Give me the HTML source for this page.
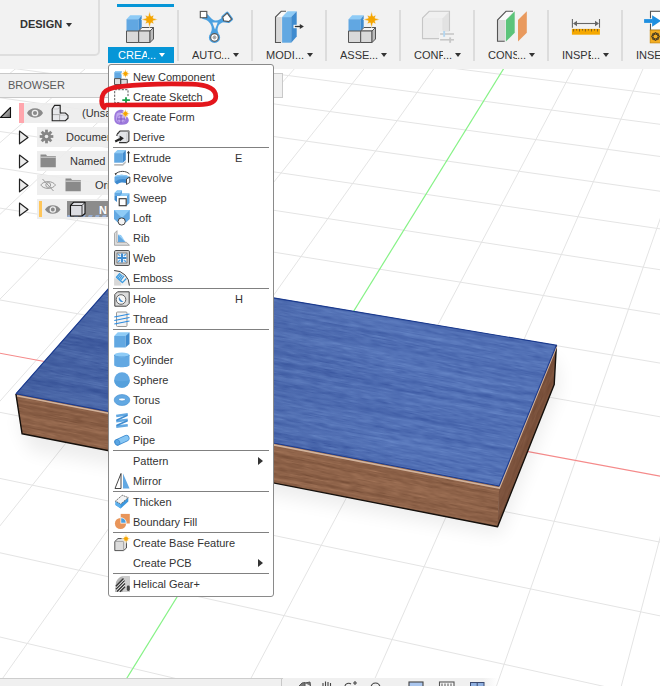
<!DOCTYPE html>
<html><head><meta charset="utf-8">
<style>
html,body{margin:0;padding:0;}
body{width:660px;height:686px;overflow:hidden;position:relative;background:#fff;font-family:"Liberation Sans",sans-serif;font-size:11px;color:#333;}
.abs{position:absolute;}
#tb{position:absolute;left:0;top:0;width:660px;height:69px;background:#f2f2f2;}
.lbl{position:absolute;top:48px;height:14px;line-height:14px;font-size:11px;color:#333;white-space:nowrap;}
.arr{position:absolute;width:0;height:0;border-left:3px solid transparent;border-right:3px solid transparent;border-top:4px solid #333;}
.sep{position:absolute;top:10px;width:2px;height:51px;background:#dcdcdc;}
#menu{position:absolute;left:108px;top:64px;width:164px;height:529px;border:1px solid #8a8a8a;border-radius:3px;background:#fff;padding-top:2px;}
.it{position:relative;height:20px;line-height:20px;padding-left:24px;white-space:nowrap;color:#333;}
.it svg{position:absolute;left:5px;top:2px;}
.sc{position:absolute;left:126px;top:0;}
.ms{height:1px;background:#808080;margin-left:4px;margin-right:4px;}
.sub{position:absolute;left:149px;top:6px;width:0;height:0;border-top:4.5px solid transparent;border-bottom:4.5px solid transparent;border-left:5px solid #333;}
</style></head><body>
<svg class="abs" style="left:0;top:0" width="660" height="686" viewBox="0 0 660 686">
<defs>
<filter id="woodb" x="-50%" y="-50%" width="200%" height="200%" color-interpolation-filters="sRGB">
<feTurbulence type="fractalNoise" baseFrequency="0.004 0.2" numOctaves="3" seed="7" result="a"/>
<feTurbulence type="fractalNoise" baseFrequency="0.07 0.7" numOctaves="2" seed="3" result="b"/>
<feComposite in="a" in2="b" operator="arithmetic" k1="0" k2="0.55" k3="0.45" k4="0"/>
<feColorMatrix type="matrix" values="0.3 0 0 0 0.17  0.32 0 0 0 0.28  0.26 0 0 0 0.58  0 0 0 0 1"/>
</filter>
<filter id="woodr" x="-50%" y="-50%" width="200%" height="200%" color-interpolation-filters="sRGB">
<feTurbulence type="fractalNoise" baseFrequency="0.006 0.3" numOctaves="3" seed="11" result="a"/>
<feTurbulence type="fractalNoise" baseFrequency="0.08 0.8" numOctaves="2" seed="5" result="b"/>
<feComposite in="a" in2="b" operator="arithmetic" k1="0" k2="0.55" k3="0.45" k4="0"/>
<feColorMatrix type="matrix" values="0.32 0 0 0 0.39  0.28 0 0 0 0.24  0.24 0 0 0 0.16  0 0 0 0 1"/>
</filter>
<linearGradient id="topshade" gradientUnits="userSpaceOnUse" x1="0" y1="0" x2="400" y2="0"><stop offset="0" stop-color="#001040" stop-opacity="0.18"/><stop offset="1" stop-color="#001040" stop-opacity="0"/></linearGradient>
<clipPath id="ctop"><polygon points="15.9,393.8 122.5,272.6 556.4,345.2 499.2,486"/></clipPath>
<clipPath id="cfront"><polygon points="15.9,393.8 499.2,486 497.6,526.7 22.1,433.8"/></clipPath>
<clipPath id="cright"><polygon points="499.2,486 556.4,345.2 554.2,384.5 497.6,526.7"/></clipPath>
</defs>
<path d="M-162.3 -97.3L-1217.4 467.6M-116.4 -92.2L-1145.5 486.4M-69.8 -87.0L-1071.4 505.9M-22.4 -81.8L-994.8 526.0M25.8 -76.4L-915.7 546.7M74.9 -71.0L-833.8 568.2M124.7 -65.5L-749.1 590.4M175.5 -59.9L-661.4 613.4M227.1 -54.2L-570.6 637.2M279.7 -48.4L-476.4 661.9M333.1 -42.5L-378.7 687.5M387.6 -36.4L-277.3 714.1M443.0 -30.3L-172.0 741.7M499.5 -24.1L-62.5 770.4M615.6 -11.2L170.0 831.3M675.3 -4.6L293.5 863.7M736.1 2.1L422.4 897.5M798.1 9.0L556.9 932.7M861.2 15.9L697.5 969.6M925.7 23.1L844.5 1008.1M991.4 30.3L998.3 1048.5M-162.3 -97.3L1058.4 37.7M-192.8 -80.9L1060.7 62.2M-225.0 -63.7L1063.2 88.3M-259.0 -45.5L1065.9 116.2M-294.9 -26.2L1068.8 146.1M-333.0 -5.9L1071.9 178.3M-373.4 15.8L1075.2 213.0M-416.4 38.8L1078.8 250.5M-462.2 63.3L1082.7 291.2M-511.0 89.5L1087.0 335.4M-563.3 117.5L1091.6 383.7M-619.4 147.5L1096.7 436.7M-679.7 179.7L1102.4 495.1M-814.9 252.1L1115.5 631.7M-891.1 292.9L1123.2 712.3M-974.0 337.3L1132.0 803.2M-1064.6 385.8L1141.9 906.5M-1164.0 439.0L1153.3 1024.8" stroke="#e4e4e4" stroke-width="1" fill="none"/>
<path d="M557.0 -17.7L51.4 800.2" stroke="#86f286" stroke-width="1.2" fill="none"/>
<path d="M-744.6 214.5L1108.6 559.8" stroke="#f58a8a" stroke-width="1.2" fill="none"/>
<filter id="blur8" x="-20%" y="-50%" width="140%" height="200%"><feGaussianBlur stdDeviation="9"/></filter>
<polygon points="18,420 122,300 556,360 560,385 500,535 30,450" fill="#000" opacity="0.07" filter="url(#blur8)"/>
<!-- box -->
<g clip-path="url(#cfront)"><rect x="0" y="380" width="520" height="160" fill="#8a5c42"/><g transform="rotate(11 16 394)"><rect x="0" y="360" width="540" height="90" filter="url(#woodr)"/></g></g>
<g clip-path="url(#cright)"><rect x="490" y="340" width="70" height="190" fill="#6a4532"/><g opacity="0.5" transform="rotate(-68 527 436)"><rect x="450" y="410" width="170" height="50" filter="url(#woodr)"/></g></g>
<g clip-path="url(#ctop)"><rect x="0" y="260" width="570" height="240" fill="#4a66ad"/><g transform="rotate(10.3 16 394)"><rect x="-20" y="180" width="620" height="260" filter="url(#woodb)"/></g><rect x="0" y="260" width="570" height="240" fill="url(#topshade)"/></g>
<polyline points="15.9,393.8 22.1,433.8 497.6,526.7 554.2,384.5 556.4,345.2" fill="none" stroke="#15100c" stroke-width="1.4" stroke-linejoin="round"/>
<polyline points="17,395.8 499.3,488 556.6,346.5" fill="none" stroke="#d2b39c" stroke-width="1.6"/>
<polyline points="15.9,393.8 122.5,272.6 556.4,345.2 499.2,486 15.9,393.8" fill="none" stroke="#1a3a8e" stroke-width="1.1"/>
</svg>

<div id="tb">
  <div class="abs" style="left:-10px;top:-10px;width:106px;height:62px;border:2px solid #dedede;border-radius:5px;"></div>
  <div class="abs" style="left:20px;top:17px;font-weight:bold;font-size:11px;color:#333;line-height:14px;">DESIGN</div>
  <div class="arr" style="left:66px;top:23px;"></div>

  <!-- CREATE -->
  <div class="abs" style="left:117px;top:4px;width:57px;height:3px;background:#0696d7;"></div>
  <div class="abs" style="left:108px;top:47px;width:66px;height:16px;background:#0696d7;"></div>
  <div class="lbl" style="left:118px;color:#fff;"><span style="display:inline-block;width:29px;overflow:hidden;vertical-align:top;">CREATE</span><span style="position:absolute;left:29px;top:0;">...</span></div>
  <div class="arr" style="left:159px;top:53px;border-top-color:#fff;"></div>
  <div class="sep" style="left:177px;"></div>

  <div class="lbl" style="left:192px;"><span style="display:inline-block;width:29px;overflow:hidden;vertical-align:top;">AUTOMATE</span><span style="position:absolute;left:29px;top:0;">...</span></div>
  <div class="arr" style="left:233px;top:53px;"></div>
  <div class="sep" style="left:251px;"></div>

  <div class="lbl" style="left:266px;"><span style="display:inline-block;width:29px;overflow:hidden;vertical-align:top;">MODIFY</span><span style="position:absolute;left:29px;top:0;">...</span></div>
  <div class="arr" style="left:307px;top:53px;"></div>
  <div class="sep" style="left:325px;"></div>

  <div class="lbl" style="left:340px;"><span style="display:inline-block;width:29px;overflow:hidden;vertical-align:top;">ASSEMBLE</span><span style="position:absolute;left:29px;top:0;">...</span></div>
  <div class="arr" style="left:381px;top:53px;"></div>
  <div class="sep" style="left:399px;"></div>

  <div class="lbl" style="left:414px;"><span style="display:inline-block;width:29px;overflow:hidden;vertical-align:top;">CONFIGURE</span><span style="position:absolute;left:29px;top:0;">...</span></div>
  <div class="arr" style="left:455px;top:53px;"></div>
  <div class="sep" style="left:473px;"></div>

  <div class="lbl" style="left:488px;"><span style="display:inline-block;width:29px;overflow:hidden;vertical-align:top;">CONSTRUCT</span><span style="position:absolute;left:29px;top:0;">...</span></div>
  <div class="arr" style="left:529px;top:53px;"></div>
  <div class="sep" style="left:547px;"></div>

  <div class="lbl" style="left:562px;"><span style="display:inline-block;width:29px;overflow:hidden;vertical-align:top;">INSPECT</span><span style="position:absolute;left:29px;top:0;">...</span></div>
  <div class="arr" style="left:603px;top:53px;"></div>
  <div class="sep" style="left:621px;"></div>

  <div class="lbl" style="left:636px;">INSE</div>

  <!-- toolbar icons -->
  <svg class="abs" style="left:122px;top:8px" width="40" height="38" viewBox="0 0 40 38">
    <path d="M4.5,11.2 L8.2,7.3 L19.7,7.3 L16.7,11.2 Z" fill="#8ecbf6"/>
    <path d="M4.5,11.2 H16.7 V23 H4.5 Z" fill="#61a7e2"/>
    <path d="M16.7,11.2 L19.7,7.3 V19.5 L16.7,23 Z" fill="#3f8bcf"/>
    <path d="M4.5,23 H16.7 V34.5 H4.5 Z" fill="#d9d9d9" stroke="#555" stroke-width="1"/>
    <path d="M16.7,23 L20,19.5 H31.5 L28,23 Z" fill="#f6f6f6" stroke="#555" stroke-width="1" stroke-linejoin="round"/>
    <path d="M16.7,23 H28 V34.5 H16.7 Z" fill="#d9d9d9" stroke="#555" stroke-width="1"/>
    <path d="M28,23 L31.5,19.5 V31 L28,34.5 Z" fill="#bdbdbd" stroke="#555" stroke-width="1" stroke-linejoin="round"/>
    <path d="M27.60,3.30 L28.98,8.17 L32.05,7.05 L30.93,10.12 L35.80,11.50 L30.93,12.88 L32.05,15.95 L28.98,14.83 L27.60,19.70 L26.22,14.83 L23.15,15.95 L24.27,12.88 L19.40,11.50 L24.27,10.12 L23.15,7.05 L26.22,8.17 Z" fill="#f5a500" stroke="#f2f2f2" stroke-width="0.6"/>
  </svg>
  <svg class="abs" style="left:196px;top:8px" width="40" height="38" viewBox="0 0 40 38">
    <path d="M9.5,4.8 C13,7 15.5,12.3 19.5,12.5 C23,12.6 25,10.5 27.5,8.5 L31.5,13.5 C27.5,13.8 23.5,15 22.2,18.5 C21.3,21 21.3,23 22.5,25 L14.5,25 C15.8,23 16,21 15.5,18.5 C14.5,15 11.5,11.5 6,10.8 Z" fill="#4aa0e0"/>
    <path d="M16.4,14.6 L21.7,14.6 L19,21.6 Z" fill="#f2f2f2"/>
    <path d="M26.8,9.1 L31.2,5.2 L35.6,11.2 L32.7,13.6 L27.6,12.7 Z" fill="#4aa0e0" stroke="#4aa0e0" stroke-width="3" stroke-linejoin="round"/>
    <rect x="4.3" y="3.4" width="6.5" height="6.3" fill="#fff" stroke="#555" stroke-width="1.1"/>
    <path d="M26.8,9.1 L31.2,5.2 L35.6,11.2 L32.7,13.6 L27.6,12.7 Z" fill="#fff" stroke="#555" stroke-width="1.1" stroke-linejoin="round"/>
    <circle cx="18.5" cy="29.4" r="5.6" fill="#4aa0e0"/>
    <circle cx="18.5" cy="29.4" r="3.8" fill="#fff" stroke="#555" stroke-width="1.1"/>
    <circle cx="18.5" cy="29.4" r="1.5" fill="none" stroke="#777" stroke-width="0.7"/>
    <path d="M18.5,28 V30.8 M17.1,29.4 H19.9" stroke="#777" stroke-width="0.5"/>
  </svg>
  <svg class="abs" style="left:270px;top:8px" width="40" height="38" viewBox="0 0 40 38">
    <path d="M5.5,9.1 L11.2,3.3 H16 L12.1,9.1 Z" fill="#fafafa"/>
    <rect x="5.5" y="9.1" width="6.2" height="25.4" fill="#d9d9d9"/>
    <path d="M11,34.5 H5.5 V9.1 L11.2,3.3 H16" fill="none" stroke="#555" stroke-width="1.1"/>
    <path d="M12.1,9.1 L17.6,3.3 H26.7 L21.2,9.1 Z" fill="#8ecbf6"/>
    <rect x="12.1" y="9.1" width="9.1" height="25.6" fill="#62a8e2"/>
    <path d="M21.2,9.1 L26.7,3.3 V28.5 L21.2,34.7 Z" fill="#3f8bcf"/>
    <rect x="23.5" y="16.8" width="6" height="3.4" fill="#fff"/>
    <path d="M24.8,18.5 H30.5" stroke="#333" stroke-width="1.4"/>
    <path d="M29.8,15.9 L33.9,18.5 L29.8,21.1 Z" fill="#333"/>
  </svg>
  <svg class="abs" style="left:344px;top:8px" width="40" height="38" viewBox="0 0 40 38">
    <path d="M4.5,11.2 L8.2,7.3 L19.7,7.3 L16.7,11.2 Z" fill="#8ecbf6"/>
    <path d="M4.5,11.2 H16.7 V23 H4.5 Z" fill="#61a7e2"/>
    <path d="M16.7,11.2 L19.7,7.3 V19.5 L16.7,23 Z" fill="#3f8bcf"/>
    <path d="M4.5,23 H16.7 V34.5 H4.5 Z" fill="#d9d9d9" stroke="#555" stroke-width="1"/>
    <path d="M16.7,23 L20,19.5 H31.5 L28,23 Z" fill="#f6f6f6" stroke="#555" stroke-width="1" stroke-linejoin="round"/>
    <path d="M16.7,23 H28 V34.5 H16.7 Z" fill="#d9d9d9" stroke="#555" stroke-width="1"/>
    <path d="M28,23 L31.5,19.5 V31 L28,34.5 Z" fill="#bdbdbd" stroke="#555" stroke-width="1" stroke-linejoin="round"/>
    <path d="M27.60,3.30 L28.98,8.17 L32.05,7.05 L30.93,10.12 L35.80,11.50 L30.93,12.88 L32.05,15.95 L28.98,14.83 L27.60,19.70 L26.22,14.83 L23.15,15.95 L24.27,12.88 L19.40,11.50 L24.27,10.12 L23.15,7.05 L26.22,8.17 Z" fill="#f5a500" stroke="#f2f2f2" stroke-width="0.6"/>
  </svg>
  <svg class="abs" style="left:418px;top:8px" width="40" height="38" viewBox="0 0 40 38">
    <path d="M4.5,10 L11.2,3.3 H31.5 L24.8,10 Z" fill="#f0f0f0"/>
    <rect x="4.5" y="10" width="20.3" height="20.6" fill="#ececec"/>
    <path d="M24.8,10 L31.5,3.3 V23.5 L24.8,30.6 Z" fill="#e2e2e2"/>
    <path d="M21,30.6 H4.5 V10 L11.2,3.3 H31.5 V23" fill="none" stroke="#c6c6c6" stroke-width="1.1"/>
    <path d="M24.8,10 V22" stroke="#dcdcdc" stroke-width="0.6"/>
    <rect x="21" y="23.6" width="16" height="10.5" fill="#f2f2f2"/>
    <rect x="22.1" y="25.2" width="13.9" height="1.6" fill="#c8c8c8"/>
    <rect x="25.2" y="23" width="1.9" height="5.8" fill="#b4d6f0"/>
    <rect x="22.1" y="31" width="13.9" height="1.6" fill="#c8c8c8"/>
    <rect x="31.2" y="29.4" width="1.9" height="5.4" fill="#c8c8c8"/>
  </svg>
  <svg class="abs" style="left:492px;top:8px" width="40" height="38" viewBox="0 0 40 38">
    <path d="M5.5,12 L14,3.3 H21 L13.9,12 Z" fill="#fafafa"/>
    <rect x="5.5" y="12" width="7.6" height="21.3" fill="#d9d9d9"/>
    <path d="M12.7,33.3 H5.5 V12 L14,3.3 H21" fill="none" stroke="#555" stroke-width="1.1"/>
    <path d="M13.9,12.1 L22.7,3.3 V24.8 L13.9,33.6 Z" fill="#5cc47a"/>
    <path d="M26,12.1 L34.8,3.3 V24.8 L26,33.6 Z" fill="#e99a5e"/>
  </svg>
  <svg class="abs" style="left:566px;top:8px" width="40" height="38" viewBox="0 0 40 38">
    <path d="M6.4,10.9 V19.7 M33.5,10.9 V19.7" stroke="#666" stroke-width="1.1"/>
    <path d="M8,15.5 H32" stroke="#666" stroke-width="1.1"/>
    <path d="M7,15.5 L11,12.8 V18.2 Z M33,15.5 L29,12.8 V18.2 Z" fill="#666"/>
    <rect x="5.9" y="20.9" width="28" height="5.8" fill="#f5a800"/>
    <path d="M7.6,21 V23.5 M10.6,21 V22.6 M13.5,21 V23.5 M16.5,21 V22.6 M19.4,21 V23.5 M22.4,21 V22.6 M25.5,21 V23.5 M28.5,21 V22.6 M31.5,21 V23.5" stroke="#7a5a20" stroke-width="0.9"/>
  </svg>
  <svg class="abs" style="left:630px;top:8px" width="30" height="38" viewBox="0 0 30 38">
    <rect x="20.5" y="3.3" width="12" height="19" fill="#fff" stroke="#555" stroke-width="1.1"/>
    <rect x="13" y="10.3" width="9.5" height="5.4" fill="#f2f2f2"/>
    <rect x="14.1" y="11.1" width="8.5" height="3.8" fill="#1e8fe0"/>
    <path d="M22.1,7.2 L31,12.9 L22.1,18.8 Z" fill="#1e8fe0"/>
    <rect x="20.2" y="22.1" width="12" height="12.8" fill="#f5ae22" stroke="#c8880a" stroke-width="0.8"/>
    <circle cx="25.5" cy="28.5" r="2.6" fill="#f5ae22" stroke="#222" stroke-width="0.9"/><circle cx="28.50" cy="28.50" r="1" fill="none" stroke="#222" stroke-width="0.8"/><circle cx="27.62" cy="30.62" r="1" fill="none" stroke="#222" stroke-width="0.8"/><circle cx="25.50" cy="31.50" r="1" fill="none" stroke="#222" stroke-width="0.8"/><circle cx="23.38" cy="30.62" r="1" fill="none" stroke="#222" stroke-width="0.8"/><circle cx="22.50" cy="28.50" r="1" fill="none" stroke="#222" stroke-width="0.8"/><circle cx="23.38" cy="26.38" r="1" fill="none" stroke="#222" stroke-width="0.8"/><circle cx="25.50" cy="25.50" r="1" fill="none" stroke="#222" stroke-width="0.8"/><circle cx="27.62" cy="26.38" r="1" fill="none" stroke="#222" stroke-width="0.8"/><circle cx="25.5" cy="28.5" r="2.1" fill="#f5ae22"/>
  </svg>
</div>

<!-- browser -->
<div class="abs" style="left:-1px;top:73px;width:282px;height:23px;background:rgba(240,240,240,0.97);border:1px solid #c9c9c9;"></div>
<div class="abs" style="left:8px;top:78px;line-height:14px;color:#5a5a5a;">BROWSER</div>


<!-- browser tree -->
<div class="abs" style="left:24px;top:103px;width:84px;height:20px;background:rgba(236,236,236,0.9);"></div>
<div class="abs" style="left:19px;top:103px;width:5px;height:20px;background:#ffa6ad;"></div>
<svg class="abs" style="left:0;top:104px" width="14" height="16" viewBox="0 0 14 16"><defs><linearGradient id="tg" x1="0" y1="0" x2="1" y2="1"><stop offset="0" stop-color="#eee"/><stop offset="1" stop-color="#666"/></linearGradient></defs><path d="M0.5,13.5 L10.5,3.5 V13.5 Z" fill="url(#tg)" stroke="#111" stroke-width="1.1" stroke-linejoin="round"/></svg>
<svg class="abs" style="left:26px;top:105px" width="20" height="16" viewBox="0 0 20 16"><path d="M1,8 C4,1.8 14,1.8 17,8 C14,14.2 4,14.2 1,8 Z" fill="#8a8a8a"/><circle cx="9" cy="8" r="2.7" fill="none" stroke="#eee" stroke-width="1.3"/></svg>
<svg class="abs" style="left:50px;top:103px" width="20" height="20" viewBox="0 0 20 20"><path d="M2.2,6 L4.6,2.4 H10.2 V10 H15.4 L18,12.4 V15.2 L15.4,17.7 H2.2 Z" fill="#e8e9ec"/><path d="M2.2,11.6 H9.6 V17.7 M9.6,11.6 L11.6,10" fill="none" stroke="#9a9a9a" stroke-width="0.8"/><path d="M2.2,6 H8.2 L10.2,2.6 M2.2,6 V11.6 M9.6,12.2 H15.2 L18,12.4" fill="none" stroke="#bdbdbd" stroke-width="0.7"/><path d="M2.2,6 L4.6,2.4 H10.2 V10 H15.4 L18,12.4 V15.2 L15.4,17.7 H2.2 Z" fill="none" stroke="#222" stroke-width="1.1" stroke-linejoin="miter"/></svg>
<div class="abs" style="left:82px;top:105px;line-height:17px;font-size:11px;color:#333;">(Unsaved)</div>

<div class="abs" style="left:37px;top:127px;width:71px;height:20px;background:rgba(236,236,236,0.9);"></div>
<svg class="abs" style="left:18px;top:130px" width="12" height="15" viewBox="0 0 12 15"><path d="M1.5,1 L10,7.4 L1.5,13.8 Z" fill="#ececec" stroke="#222" stroke-width="1.2" stroke-linejoin="round"/></svg>
<svg class="abs" style="left:39px;top:129px" width="16" height="16" viewBox="0 0 16 16"><g transform="translate(7.5,7.5)" fill="#858585"><circle r="4.6"/><g id="teeth"><rect x="-1.4" y="-6.8" width="2.8" height="3"/><rect x="-1.4" y="3.8" width="2.8" height="3"/><rect x="-6.8" y="-1.4" width="3" height="2.8"/><rect x="3.8" y="-1.4" width="3" height="2.8"/></g><g transform="rotate(45)"><rect x="-1.4" y="-6.8" width="2.8" height="3"/><rect x="-1.4" y="3.8" width="2.8" height="3"/><rect x="-6.8" y="-1.4" width="3" height="2.8"/><rect x="3.8" y="-1.4" width="3" height="2.8"/></g><circle r="1.8" fill="#ececec"/></g></svg>
<div class="abs" style="left:66px;top:130px;line-height:14px;font-size:11px;color:#333;">Document Settings</div>

<div class="abs" style="left:37px;top:151px;width:71px;height:20px;background:rgba(236,236,236,0.9);"></div>
<svg class="abs" style="left:18px;top:154px" width="12" height="15" viewBox="0 0 12 15"><path d="M1.5,1 L10,7.4 L1.5,13.8 Z" fill="#ececec" stroke="#222" stroke-width="1.2" stroke-linejoin="round"/></svg>
<svg class="abs" style="left:40px;top:154px" width="16" height="14" viewBox="0 0 16 14"><path d="M0.5,0.5 H6 L7,2 H15.8 V13.2 H0.5 Z" fill="#8a8a8a"/><path d="M0.5,3.2 H15.8" stroke="#ececec" stroke-width="0.8"/></svg>
<div class="abs" style="left:70px;top:154px;line-height:14px;font-size:11px;color:#333;">Named Views</div>

<div class="abs" style="left:37px;top:175px;width:71px;height:20px;background:rgba(236,236,236,0.9);"></div>
<svg class="abs" style="left:18px;top:178px" width="12" height="15" viewBox="0 0 12 15"><path d="M1.5,1 L10,7.4 L1.5,13.8 Z" fill="#ececec" stroke="#222" stroke-width="1.2" stroke-linejoin="round"/></svg>
<svg class="abs" style="left:40px;top:178px" width="17" height="14" viewBox="0 0 17 14"><path d="M0.8,7 C3.5,2.5 12.5,2.5 15.5,7 C12.5,11.5 3.5,11.5 0.8,7 Z" fill="none" stroke="#9a9a9a" stroke-width="1"/><circle cx="8.2" cy="7" r="2.4" fill="none" stroke="#9a9a9a" stroke-width="1"/><path d="M2.5,1 L13.5,13" stroke="#9a9a9a" stroke-width="1"/></svg>
<svg class="abs" style="left:65px;top:178px" width="16" height="14" viewBox="0 0 16 14"><path d="M0.5,0.5 H6 L7,2 H15.8 V13.2 H0.5 Z" fill="#8a8a8a"/><path d="M0.5,3.2 H15.8" stroke="#ececec" stroke-width="0.8"/></svg>
<div class="abs" style="left:95px;top:178px;line-height:14px;font-size:11px;color:#333;">Origin</div>

<div class="abs" style="left:37px;top:199px;width:71px;height:20px;background:rgba(236,236,236,0.9);"></div>
<svg class="abs" style="left:18px;top:202px" width="12" height="15" viewBox="0 0 12 15"><path d="M1.5,1 L10,7.4 L1.5,13.8 Z" fill="#ececec" stroke="#222" stroke-width="1.2" stroke-linejoin="round"/></svg>
<div class="abs" style="left:39px;top:201px;width:3px;height:16px;background:#ffc65a;"></div>
<svg class="abs" style="left:44px;top:203px" width="18" height="14" viewBox="0 0 18 14"><path d="M1,6.5 C4,0.8 13.5,0.8 16.5,6.5 C13.5,12.2 4,12.2 1,6.5 Z" fill="#8a8a8a"/><circle cx="8.8" cy="6.5" r="2.6" fill="none" stroke="#eee" stroke-width="1.3"/></svg>
<div class="abs" style="left:67px;top:201px;width:41px;height:16px;background:#8c8c8c;"></div>
<svg class="abs" style="left:67px;top:201px" width="41" height="16" viewBox="0 0 41 16"><path d="M1,15 L5,15 M8,15 L12,15 M15,15 L19,15 M22,15 L26,15 M29,15 L33,15 M36,15 L40,15" stroke="#9ab8e8" stroke-width="1.5" transform="skewX(-30) translate(8,0)"/><path d="M3.5,4.5 L6.5,1.3 H18 V12.5 L15,15 H3.5 Z" fill="#dcdde2" stroke="#111" stroke-width="1.1" stroke-linejoin="round"/><path d="M3.5,4.5 H15 V15 M15,4.5 L18,1.3" fill="none" stroke="#111" stroke-width="0.8"/><text x="32" y="12.5" font-family="Liberation Sans" font-weight="bold" font-size="11" fill="#fff">N</text></svg>

<div id="menu">
  <div class="it"><svg width="16" height="16" viewBox="0 0 16 16" overflow="visible"><path d="M0.3,3.5 L1.8,2 H7.6 V9.6 H0.3 Z" fill="#62a8e2"/><path d="M0.3,3.5 L1.8,2 H7.6 L6.5,3.5 Z" fill="#8ecbf6"/><path d="M0.5,9.6 H6.7 V15.5 H0.5 Z M6.7,10.3 H13.3 V15.5 H6.7 Z" fill="#dcdcdc" stroke="#444" stroke-width="0.9"/><path d="M11.50,0.10 L12.30,2.86 L14.05,2.25 L13.44,4.00 L16.20,4.80 L13.44,5.60 L14.05,7.35 L12.30,6.74 L11.50,9.50 L10.70,6.74 L8.95,7.35 L9.56,5.60 L6.80,4.80 L9.56,4.00 L8.95,2.25 L10.70,2.86 Z" fill="#f5a500" stroke="#fff" stroke-width="0.5"/></svg>New Component</div>
  <div class="it"><svg width="16" height="16" viewBox="0 0 16 16" overflow="visible"><path d="M0.7,0.7 H14 V13.7 H0.7 Z" fill="none" stroke="#444" stroke-width="0.9" stroke-dasharray="2.2,1.3"/><rect x="6" y="7.5" width="11" height="9" fill="#fff"/><path d="M12,8.3 V14 M8.3,11.1 H15.9" stroke="#1aa04a" stroke-width="1.8"/></svg>Create Sketch</div>
  <div class="it"><svg width="16" height="16" viewBox="0 0 16 16" overflow="visible"><path d="M3,2 C6,0 9,0.5 10,2 L12,7 C14,8 15,10 14.8,12 C14,15 11,16 7,15.8 C3,15.5 0.5,14 0.3,10 C0,6 1,3.5 3,2 Z" fill="#9c78dc"/><path d="M2.5,5 C3,3.5 6,3 8,4 L11,9 C12,11 11,14 7,14 C3.5,14 2,12.5 2,9 Z" fill="#c2a8ee"/><path d="M3,10 H11 M7,6 V14" stroke="#7a52c0" stroke-width="1"/><circle cx="7" cy="10" r="3.8" fill="none" stroke="#8c64d0" stroke-width="0.6"/><path d="M11.50,0.10 L12.30,2.86 L14.05,2.25 L13.44,4.00 L16.20,4.80 L13.44,5.60 L14.05,7.35 L12.30,6.74 L11.50,9.50 L10.70,6.74 L8.95,7.35 L9.56,5.60 L6.80,4.80 L9.56,4.00 L8.95,2.25 L10.70,2.86 Z" fill="#f5a500" stroke="#fff" stroke-width="0.5"/></svg>Create Form</div>
  <div class="it"><svg width="16" height="16" viewBox="0 0 16 16" overflow="visible"><path d="M2.9,5.5 L6,2 H14.9 V12 L12.8,13.6 H5" fill="#e2e4e8" stroke="#333" stroke-width="1.1" stroke-linejoin="round"/><path d="M2.9,5.5 V7.5 M6,2 L2.9,5.5" stroke="#333" stroke-width="1.1" stroke-dasharray="1.5,1"/><path d="M12.8,13.6 V4.5 L14.9,2" fill="none" stroke="#bbb" stroke-width="0.6"/><path d="M1.2,12.5 L6,10" stroke="#222" stroke-width="2"/><path d="M5.6,6.4 L9.9,9.3 L5.8,12.6 Z" fill="#222"/></svg>Derive</div>
  <div class="ms"></div>
  <div class="it"><svg width="16" height="16" viewBox="0 0 16 16" overflow="visible"><path d="M0.2,3.1 H8.9 V12.7 H0.2 Z" fill="#62a8e2"/><path d="M0.2,3.1 L3.5,0 H11.8 L8.9,3.1 Z" fill="#8ecbf6"/><path d="M8.9,3.1 L11.8,0 V10 L8.9,12.7 Z" fill="#3f8bcf"/><path d="M0.2,14 H8.5 L11.8,11 V13 L9,15.8 H0.2 Z" fill="#bbb"/><path d="M14.5,2.5 V12.7" stroke="#333" stroke-width="1.1"/><path d="M12.8,3.3 L14.5,0.8 L16.2,3.3 Z" fill="#333"/></svg>Extrude<span class="sc">E</span></div>
  <div class="it"><svg width="16" height="16" viewBox="0 0 16 16" overflow="visible"><path d="M1.5,4 C5,0.5 12,0.5 15.5,4" fill="none" stroke="#333" stroke-width="0.9"/><path d="M0.6,3 L3,3.6 L1.6,5.5 Z" fill="#333"/><path d="M0.5,7 C3,4 12,4 15.5,7 V11.5 C12,9 4,9 0.5,12 Z" fill="#62a8e2"/><path d="M0.5,7 C3,4 12,4 15.5,7 C12,6 4,6 0.5,7 Z" fill="#8ecbf6"/><path d="M0.5,12 L3,14.5 C5,12 10,12 12,13 V9.5 C8,8.5 3,9.5 0.5,12" fill="#3f8bcf"/><path d="M12.5,9 L15.8,7 V12.5 L12.5,14.5 Z" fill="#fff" stroke="#333" stroke-width="0.9"/></svg>Revolve</div>
  <div class="it"><svg width="16" height="16" viewBox="0 0 16 16" overflow="visible"><path d="M0.5,3 L3,0.5 H8 V3.5 H15.5 V13 L13,15.5 V6 H0.5 Z" fill="#62a8e2"/><path d="M0.5,3 L3,0.5 H8 L6,3 Z M8,3.5 H15.5 L13,6 H6 Z" fill="#8ecbf6"/><path d="M0.5,6 V10 L3,12 V6 Z" fill="#3f8bcf"/><rect x="5.2" y="8.7" width="7" height="7" fill="#fff" stroke="#333" stroke-width="1.1"/></svg>Sweep</div>
  <div class="it"><svg width="16" height="16" viewBox="0 0 16 16" overflow="visible"><path d="M0,0 H15.8 V9 L12,12.6 H3.8 L0,9 Z" fill="#62a8e2"/><path d="M0,0 L7.9,8 L15.8,0 Z" fill="#8ecbf6"/><circle cx="7.7" cy="11.5" r="3.6" fill="#f4f4f4" stroke="#333" stroke-width="0.9"/></svg>Loft</div>
  <div class="it"><svg width="16" height="16" viewBox="0 0 16 16" overflow="visible"><path d="M3,0.7 L0.5,3.2 V15.3 H15.5 L12.5,12.3 H3 Z" fill="#ddd" stroke="#999" stroke-width="0.8"/><path d="M4,4.5 L11.5,12 H4 Z" fill="#62a8e2"/><path d="M4,4.5 L7,5 L11.5,12 Z" fill="#8ecbf6"/></svg>Rib</div>
  <div class="it"><svg width="16" height="16" viewBox="0 0 16 16" overflow="visible"><rect x="0.6" y="0.6" width="14.8" height="14.8" rx="1" fill="#ddd" stroke="#444" stroke-width="1"/><rect x="3" y="3" width="10" height="10" fill="#fff" stroke="#555" stroke-width="0.8"/><path d="M8,3.5 V12.5 M3.5,8 H12.5" stroke="#3f8bcf" stroke-width="2.2"/><path d="M4,4 L6,6 M12,4 L10,6 M4,12 L6,10 M12,12 L10,10" stroke="#62a8e2" stroke-width="1.5"/></svg>Web</div>
  <div class="it"><svg width="16" height="16" viewBox="0 0 16 16" overflow="visible"><path d="M0.1,0.5 A15.1,15.1 0 0 1 15.4,15.6 H0.1 Z" fill="#f0f0f0"/><path d="M0.1,8.3 A7.3,7.3 0 0 1 7.4,15.6 H0.1 Z" fill="#d8d8d8"/><path d="M0.1,0.5 A15.1,15.1 0 0 1 15.4,15.6" fill="none" stroke="#444" stroke-width="1"/><path d="M6,3.2 L2.4,7.2 L8.4,12.6 L12.4,8.5 M8.4,5.2 L5.3,9.3 M10.2,6.5" fill="none" stroke="#3c9be0" stroke-width="1.3" stroke-linejoin="round"/><path d="M7.2,4.2 L3.8,8.4 M10,5.8 L6.6,10.3 M11.8,7.4" fill="none" stroke="#3c9be0" stroke-width="1.3"/></svg>Emboss</div>
  <div class="ms"></div>
  <div class="it"><svg width="16" height="16" viewBox="0 0 16 16" overflow="visible"><path d="M0.8,3.5 L3.5,0.8 H15.2 V12.5 L12.5,15.2 H0.8 Z" fill="#dcdcdc" stroke="#444" stroke-width="1"/><circle cx="7" cy="8.5" r="4.8" fill="#f6f6f6" stroke="#555" stroke-width="0.9"/><path d="M5,6 C4,9 6,11.5 9.5,11 C8,10 6,8 5,6 Z" fill="#3f8bcf"/></svg>Hole<span class="sc">H</span></div>
  <div class="it"><svg width="16" height="16" viewBox="0 0 16 16" overflow="visible"><rect x="2.5" y="1" width="10.5" height="14.5" rx="1" fill="#f2f2f2" stroke="#999" stroke-width="1"/><path d="M0.3,6 L15.5,3 M0.3,9.5 L15.5,6.5 M0.3,13 L15.5,10" stroke="#2a8ae0" stroke-width="1.2"/></svg>Thread</div>
  <div class="ms"></div>
  <div class="it"><svg width="16" height="16" viewBox="0 0 16 16" overflow="visible"><path d="M0.2,4 H11.5 V15.5 H0.2 Z" fill="#62a8e2"/><path d="M0.2,4 L3.8,0.3 H15.5 L11.5,4 Z" fill="#8ecbf6"/><path d="M11.5,4 L15.5,0.3 V12 L11.5,15.5 Z" fill="#3f8bcf"/></svg>Box</div>
  <div class="it"><svg width="16" height="16" viewBox="0 0 16 16" overflow="visible"><path d="M0.2,3 V13 C0.2,16 15.5,16 15.5,13 V3 Z" fill="#62a8e2"/><ellipse cx="7.85" cy="3" rx="7.65" ry="2.6" fill="#8ecbf6"/><path d="M0.2,3 C0.2,5.6 15.5,5.6 15.5,3" fill="none" stroke="#3f8bcf" stroke-width="0.6"/></svg>Cylinder</div>
  <div class="it"><svg width="16" height="16" viewBox="0 0 16 16" overflow="visible"><circle cx="8" cy="8" r="7.8" fill="#62a8e2"/><path d="M0.2,8 A7.8,7.8 0 0 0 15.8,8 C13,9.5 3,9.5 0.2,8 Z" fill="#55a0dc"/></svg>Sphere</div>
  <div class="it"><svg width="16" height="16" viewBox="0 0 16 16" overflow="visible"><ellipse cx="8" cy="8" rx="7.8" ry="5.5" fill="#62a8e2" stroke="#3f8bcf" stroke-width="0.6"/><ellipse cx="8" cy="7.5" rx="3.2" ry="1.4" fill="#fff" stroke="#3f8bcf" stroke-width="0.6"/></svg>Torus</div>
  <div class="it"><svg width="16" height="16" viewBox="0 0 16 16" overflow="visible"><path d="M2.2,4 L13.8,2.2 M2.2,9.2 L13.8,7.8 M2.2,14.6 L13.8,13.2" stroke="#62a8e2" stroke-width="2.6"/><path d="M13.5,3.2 L2.5,8.2 M13.5,8.8 L2.5,13.6" stroke="#3f8bcf" stroke-width="1.6"/></svg>Coil</div>
  <div class="it"><svg width="16" height="16" viewBox="0 0 16 16" overflow="visible"><path d="M3.6,10.2 L12.2,6.2" stroke="#3f8bcf" stroke-width="6.6" stroke-linecap="round"/><path d="M3.6,10.2 L12.2,6.2" stroke="#86c6f4" stroke-width="5" stroke-linecap="round"/><ellipse cx="3.4" cy="10.3" rx="2.3" ry="3" transform="rotate(-25 3.4 10.3)" fill="#5aa6e4" stroke="#3f8bcf" stroke-width="0.8"/></svg>Pipe</div>
  <div class="ms"></div>
  <div class="it">Pattern<span class="sub"></span></div>
  <div class="it"><svg width="16" height="16" viewBox="0 0 16 16" overflow="visible"><path d="M7,0.5 V15.5 H1 Z" fill="#fff" stroke="#333" stroke-width="0.9" stroke-linejoin="round"/><path d="M9,0.5 L15.5,15.5 H9 Z" fill="#62a8e2"/></svg>Mirror</div>
  <div class="ms"></div>
  <div class="it"><svg width="16" height="16" viewBox="0 0 16 16" overflow="visible"><path d="M1.5,7.1 V10.9 L6.7,14.4 L14.3,7.6 V3.6 L6.7,10 Z" fill="#3d98de"/><path d="M1.5,7.1 L6.7,10 V14.4 L1.5,10.9 Z" fill="#5cb0ee"/><path d="M1.5,7.1 L8.2,1.2 L14.3,3.6 L6.7,10 Z" fill="#f4f4f4" stroke="#555" stroke-width="0.9" stroke-dasharray="1.4,0.8" stroke-linejoin="round"/></svg>Thicken</div>
  <div class="it"><svg width="16" height="16" viewBox="0 0 16 16" overflow="visible"><rect x="6.7" y="-0.1" width="9.1" height="9.6" fill="#e8955a"/><circle cx="6.5" cy="9.5" r="5.6" fill="#e8955a"/><path d="M6.5,9.5 V3.3 A6.2,6.2 0 0 1 12.7,9.5 Z" fill="#fff"/><path d="M7.2,8.8 V4.3 A4.6,4.6 0 0 1 11.7,8.8 Z" fill="#4a9fe0"/></svg>Boundary Fill</div>
  <div class="ms"></div>
  <div class="it"><svg width="16" height="16" viewBox="0 0 16 16" overflow="visible"><path d="M0.8,6.5 L4,3.5 H12.5 V13 L9.5,15.6 H0.8 Z" fill="#dcdcdc" stroke="#444" stroke-width="0.9" stroke-linejoin="round"/><path d="M0.8,6.5 H9.5 V15.6 M9.5,6.5 L12.5,3.5" fill="none" stroke="#888" stroke-width="0.6"/><path d="M12.00,-0.70 L12.77,1.95 L14.40,1.40 L13.85,3.03 L16.50,3.80 L13.85,4.57 L14.40,6.20 L12.77,5.65 L12.00,8.30 L11.23,5.65 L9.60,6.20 L10.15,4.57 L7.50,3.80 L10.15,3.03 L9.60,1.40 L11.23,1.95 Z" fill="#f5a500" stroke="#fff" stroke-width="0.5"/></svg>Create Base Feature</div>
  <div class="it">Create PCB<span class="sub"></span></div>
  <div class="ms"></div>
  <div class="it"><svg width="16" height="16" viewBox="0 0 16 16" overflow="visible"><path d="M1,15.9 L2,6 C3.5,2.5 6,0.8 8.5,0.3 H15.7 V15.9 Z" fill="#b4b4b4"/><path d="M8.5,0.3 H15.7 V15.9 H9 Z" fill="#cdcdcd"/><path d="M2,13 L10.5,4.5 M1.8,10.2 L9.5,2.5 M3,15.5 L11,7.5 M6,15.7 L11,10.7" stroke="#333" stroke-width="1.3"/><path d="M2.3,11.8 L10,4 M2.5,14.5 L10.6,6.3 M4.5,15.6 L10.8,9.2" stroke="#eee" stroke-width="0.7"/><rect x="12.8" y="9.5" width="3" height="5.5" rx="1.4" fill="#444"/></svg>Helical Gear+</div>
</div>

<!-- red loop -->
<svg class="abs" style="left:0;top:0" width="660" height="686" viewBox="0 0 660 686">
<path d="M104.2,107.6 C101,104.5 100.8,97.5 103.8,93 C106.5,89 111.5,87.6 120,86.6 C140,84.3 168,83.3 192,84.2 C207,84.8 215.8,89 215.8,96.5 C215.8,102.3 210,104.5 199,104.6 C170,104.9 130,104.9 106.5,105" fill="none" stroke="#e3161c" stroke-width="4.7" stroke-linecap="round" stroke-linejoin="round"/>
</svg>

<!-- bottom bar -->
<div class="abs" style="left:0;top:678px;width:283px;height:8px;background:#f0f0f0;border-top:1px solid #cdcdcd;"></div>
<div class="abs" style="left:283px;top:678px;width:215px;height:8px;background:linear-gradient(to right,#f0f0f0 0,#f0f0f0 200px,rgba(240,240,240,0) 215px);"></div>
<div class="abs" style="left:281px;top:679px;width:1px;height:7px;background:#c8c8c8;"></div>
<svg class="abs" style="left:283px;top:678px" width="215" height="8" viewBox="0 0 215 8">
<path d="M16,8 L19,5 L22,4.5 L22,8 M22,5 L27,4 L27.5,8" fill="#777" stroke="#555" stroke-width="1"/>
<path d="M40,8 V5 M42.5,8 V3.5 M45,8 V4 M47.5,8 V5" stroke="#444" stroke-width="1.1"/>
<path d="M62,8 C62,5.5 66,4.5 68,6 M70,5 H74 M72,3 V7" fill="none" stroke="#444" stroke-width="1.1"/>
<circle cx="92.5" cy="9.5" r="4.5" fill="none" stroke="#444" stroke-width="1.2"/><path d="M89.5,8.5 H95.5" stroke="#444" stroke-width="1"/>
<rect x="126" y="4" width="14" height="6" fill="#aac6ee" stroke="#444" stroke-width="1.1"/>
<rect x="156.5" y="4" width="14.5" height="6" fill="#f6f6f6" stroke="#555" stroke-width="1.1"/><path d="M159,5.5 V8 M162,5.5 V8 M165,5.5 V8 M168,5.5 V8" stroke="#555" stroke-width="1"/>
<rect x="187.5" y="4.5" width="13.5" height="6" fill="#8fb0e0" stroke="#3a4a70" stroke-width="1"/><path d="M194.2,4.5 V10" stroke="#3a4a70" stroke-width="1"/>
</svg>
</body></html>
